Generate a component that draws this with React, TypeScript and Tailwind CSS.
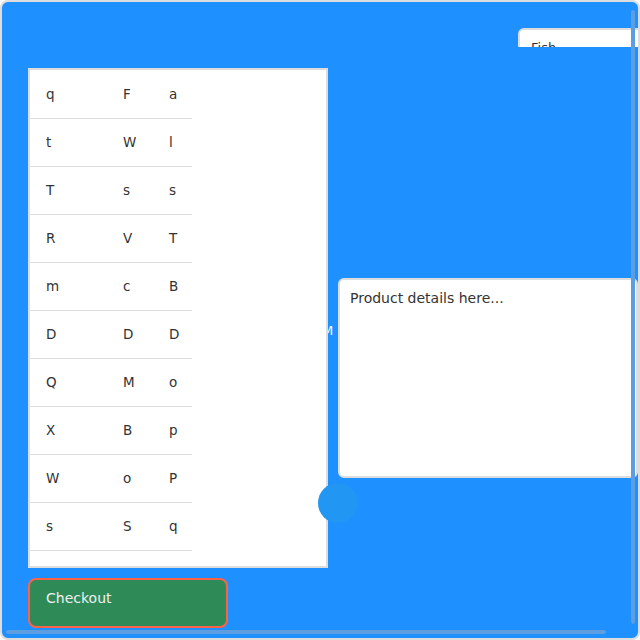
import React from "react";

const rows = [
  ["q", "F", "a"],
  ["t", "W", "l"],
  ["T", "s", "s"],
  ["R", "V", "T"],
  ["m", "c", "B"],
  ["D", "D", "D"],
  ["Q", "M", "o"],
  ["X", "B", "p"],
  ["W", "o", "P"],
  ["s", "S", "q"],
];

export default function App() {
  const font = { fontFamily: '"DejaVu Sans", "Noto Sans", sans-serif' };
  return (
    <div
      className="relative w-[640px] h-[640px] overflow-hidden rounded-lg border-2 border-[#dddddd] bg-[#1e90ff] text-[#333333]"
      style={font}
    >
      <div className="pl-[26px] pt-[26px]">
        <div className="flex h-[40px] justify-end">
          <div className="h-[19px] w-[120px] overflow-hidden">
            <div className="flex h-[34px] w-[160px] items-start justify-between rounded-md border-2 border-[#dddddd] bg-white pl-[11px] pr-[44px] pt-[10px] text-[13px] leading-[16px] text-[#333]">
              <span>Fish</span>
              <span className="text-[11px]">⌄</span>
            </div>
          </div>
        </div>
        <div className="relative flex items-start gap-[10px]">
          <div className="relative z-10 h-[500px] w-[300px] border-2 border-[#dddddd] bg-white">
            <table className="border-collapse text-[13.5px]">
              <tbody>
                {rows.map((r, i) => (
                  <tr key={i} className="h-[48px] border-b border-[#dddddd]">
                    <td className="w-[77px] pl-4 align-middle">{r[0]}</td>
                    <td className="w-[46px] pl-4 align-middle">{r[1]}</td>
                    <td className="w-[39px] pl-4 align-middle">{r[2]}</td>
                  </tr>
                ))}
              </tbody>
            </table>
          </div>
          <span className="absolute left-[294px] top-[255px] text-[13px] leading-[16px] text-white">M</span>
          <div className="mt-[210px] h-[200px] w-[300px] rounded-md border-2 border-[#dddddd] bg-white px-[10px] pt-[8px] text-[14px] leading-[20px] text-[#333]">
            Product details here...
          </div>
          <div className="absolute left-[290px] top-[415px] z-20 h-[40px] w-[40px] rounded-full bg-[#2196f3]" />
        </div>
        <button
          className="mt-[10px] flex h-[50px] w-[200px] items-start rounded-lg border-2 border-[#ff6347] bg-[#2e8b57] pl-[16px] pt-[9px] text-[14px] leading-[18px] text-[#f0f0f0]"
          style={font}
        >
          Checkout
        </button>
      </div>
      <div className="absolute right-[3px] top-[8px] h-[614px] w-[4px] rounded-full bg-[#5c9ee0]" />
      <div className="absolute bottom-[4px] left-[4px] h-[4px] w-[600px] rounded-full bg-[#5c9ee0]" />
    </div>
  );
}
